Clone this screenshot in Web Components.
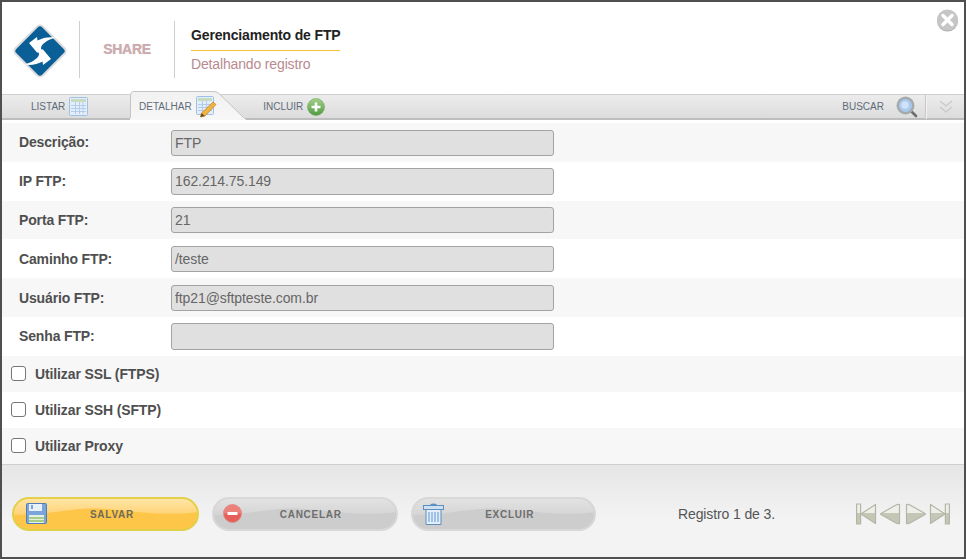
<!DOCTYPE html>
<html lang="pt-BR">
<head>
<meta charset="utf-8">
<title>Gerenciamento de FTP</title>
<style>
  html, body { margin: 0; padding: 0; background: #fff; }
  body { font-family: "Liberation Sans", Arial, sans-serif; }
</style>
</head>
<body>
<ftp-app>
  <ftp-header slot="header" title-text="Gerenciamento de FTP" subtitle="Detalhando registro"></ftp-header>
  <ftp-tabs slot="tabs"></ftp-tabs>

  <ftp-field label="Descrição:" value="FTP"></ftp-field>
  <ftp-field label="IP FTP:" value="162.214.75.149"></ftp-field>
  <ftp-field label="Porta FTP:" value="21"></ftp-field>
  <ftp-field label="Caminho FTP:" value="/teste"></ftp-field>
  <ftp-field label="Usuário FTP:" value="ftp21@sftpteste.com.br"></ftp-field>
  <ftp-field label="Senha FTP:" value=""></ftp-field>
  <ftp-check>Utilizar SSL (FTPS)</ftp-check>
  <ftp-check>Utilizar SSH (SFTP)</ftp-check>
  <ftp-check>Utilizar Proxy</ftp-check>

  <ftp-footer slot="footer">
    <ftp-button kind="save" primary>SALVAR</ftp-button>
    <ftp-button kind="cancel">CANCELAR</ftp-button>
    <ftp-button kind="delete">EXCLUIR</ftp-button>
    <ftp-pager text="Registro 1 de 3."></ftp-pager>
  </ftp-footer>
</ftp-app>

<script>
class FtpApp extends HTMLElement {
  connectedCallback() {
    this.attachShadow({ mode: "open" });
    this.shadowRoot.innerHTML = `
      <style>
        :host {
          display: flex;
          flex-direction: column;
          box-sizing: border-box;
          width: 966px;
          height: 559px;
          border: 2px solid #4f4f4f;
          background: #fff;
          overflow: hidden;
        }
        main {
          display: flex;
          flex-direction: column;
          padding-top: 3px;
        }
        /* header and tabs count as children too, so the first row is child 3 */
        ::slotted(ftp-field:nth-child(even)),
        ::slotted(ftp-check:nth-child(even)) { background: #fff; }
      </style>
      <slot name="header"></slot>
      <slot name="tabs"></slot>
      <main><slot></slot></main>
      <slot name="footer"></slot>
    `;
  }
}

class FtpHeader extends HTMLElement {
  connectedCallback() {
    this.attachShadow({ mode: "open" });
    this.shadowRoot.innerHTML = `
      <style>
        :host {
          display: flex;
          align-items: flex-start;
          position: relative;
          height: 92px;
          background: #fff;
          flex: none;
        }
        .logo { width: 56px; height: 56px; margin: 21px 0 0 10px; flex: none; }
        .sep { width: 1px; height: 57px; margin-top: 19px; background: #cfcfcf; flex: none; }
        .sep.a { margin-left: 11px; }
        .share {
          width: 94px;
          margin-top: 39px;
          text-align: center;
          font-size: 14px;
          font-weight: bold;
          letter-spacing: -0.3px;
          color: #cbabae;
          text-shadow: 0 0 1px #d8c0c2;
        }
        .titles { margin: 25px 0 0 16px; }
        .title {
          font-size: 14px;
          font-weight: bold;
          letter-spacing: -0.15px;
          color: #222;
          line-height: 17px;
          padding-bottom: 6px;
          border-bottom: 1px solid #f5c33b;
        }
        .sub {
          font-size: 14px;
          letter-spacing: -0.15px;
          color: #b98a90;
          line-height: 17px;
          margin-top: 5px;
        }
        .close { position: absolute; right: 5px; top: 7px; width: 23px; height: 23px; }
      </style>
      <svg class="logo" viewBox="0 0 56 56">
        <rect x="8.750" y="8.750" width="38.500" height="38.500" rx="4" transform="rotate(45 28 28)" fill="#0b5f97" stroke="#dcdcdc" stroke-width="2"/>
        <path d="M17 20 L25 14 L25.500 17.500 C31 14.500 37 13.500 43.500 14.500 C38 16 32 19 29.500 23 C28.500 25.500 29 28 31 30 L25 29.500 Z" fill="#fff"/>
        <path d="M39 36 L31 42 L30.500 38.500 C25 41.500 19 42.500 12.500 41.500 C18 40 24 37 26.500 33 C27.500 30.500 27 28 25 26 L31 26.500 Z" fill="#fff"/>
      </svg>
      <div class="sep a"></div>
      <div class="share">SHARE</div>
      <div class="sep"></div>
      <div class="titles">
        <div class="title">${this.getAttribute("title-text")}</div>
        <div class="sub">${this.getAttribute("subtitle")}</div>
      </div>
      <svg class="close" viewBox="0 0 23 23">
        <circle cx="11.500" cy="12" r="10.500" fill="#b0b0b0"/>
        <circle cx="11.500" cy="11" r="10.500" fill="#c6c6c6"/>
        <path d="M7 6.500l9 9M16 6.500l-9 9" stroke="#fff" stroke-width="3.400" stroke-linecap="round"/>
      </svg>
    `;
  }
}

const tableIcon = `
  <svg width="19" height="19" viewBox="0 0 19 19">
    <rect x=".5" y=".5" width="18" height="18" rx="1" fill="#e4eefa" stroke="#9fc0e4"/>
    <rect x="2" y="2" width="15" height="3" fill="#c5dcc0"/>
    <path d="M2 8.500h15M2 11.500h15M2 14.500h15M6.500 5v12M10.500 5v12M14 5v12" stroke="#b2cdea" fill="none"/>
  </svg>`;

class FtpTabs extends HTMLElement {
  connectedCallback() {
    this.attachShadow({ mode: "open" });
    this.shadowRoot.innerHTML = `
      <style>
        :host {
          display: flex;
          align-items: center;
          position: relative;
          box-sizing: border-box;
          height: 26px;
          flex: none;
          font-size: 10px;
          color: #5f6b78;
          background: linear-gradient(#ececec, #dcdcdc);
          border-top: 1px solid #cfcfcf;
          border-bottom: 2px solid #bdbdbd;
        }
        .tab { display: flex; align-items: center; gap: 4px; }
        .list { margin-left: 29px; }
        .active {
          position: absolute;
          left: 128px;
          top: -4px;
          width: 116px;
          height: 29px;
        }
        .active svg.bg { position: absolute; left: 0; top: 0; }
        .active .inner { position: absolute; left: 9px; top: 6px; display: flex; align-items: center; gap: 4px; height: 19px; }
        .add { margin-left: 175px; }
        .spacer { flex: 1; }
        .search { margin-right: 7px; }
        .lens { margin-left: 8px; }
        .div { width: 1px; height: 24px; background: #c8c8c8; border-right: 1px solid #f2f2f2; }
        .more { width: 37px; display: flex; justify-content: center; }
      </style>
      <div class="tab list"><span>LISTAR</span>${tableIcon}</div>
      <div class="active">
        <svg class="bg" width="116" height="29" viewBox="0 0 116 29">
          <defs><linearGradient id="t" x1="0" y1="0" x2="0" y2="1"><stop offset="0" stop-color="#f1f1f1"/><stop offset="1" stop-color="#f7f7f7"/></linearGradient></defs>
          <path d="M0 29 V5 Q0 .5 4 .5 H84 Q87 .5 89 2.500 L114 27 L116 29 Z" fill="url(#t)"/>
          <path d="M.5 27 V5 Q.5 .5 4 .5 H84 Q87 .5 89 2.500 L114 27" fill="none" stroke="#c4c4c4"/>
        </svg>
        <div class="inner">
          <span>DETALHAR</span>
          <svg width="21" height="21" viewBox="0 0 21 21" style="overflow:visible">
            <rect x=".5" y=".5" width="17" height="18" rx="1" fill="#e4eefa" stroke="#9fc0e4"/>
            <rect x="2" y="2" width="14" height="3" fill="#c5dcc0"/>
            <path d="M2 8.500h14M2 11.500h14M2 14.500h14M6.500 5v12M10.500 5v12" stroke="#b2cdea" fill="none"/>
            <path d="M17 6l3 2.500L9 20l-4.500 1 1-4Z" fill="#f2b441" stroke="#b9802a" stroke-width=".7"/>
            <path d="M4.500 21l1-4 3.400 3Z" fill="#6b4a22"/>
          </svg>
        </div>
      </div>
      <div class="tab add">
        <span>INCLUIR</span>
        <svg width="18" height="18" viewBox="0 0 18 18">
          <defs><linearGradient id="g" x1="0" y1="0" x2="0" y2="1"><stop offset="0" stop-color="#a7d08c"/><stop offset="1" stop-color="#4d9a3e"/></linearGradient></defs>
          <circle cx="9" cy="9" r="8.500" fill="url(#g)" stroke="#6fa95c" stroke-width=".6"/>
          <path d="M9 4.500v9M4.500 9h9" stroke="#fff" stroke-width="2.600"/>
        </svg>
      </div>
      <div class="spacer"></div>
      <div class="tab search">
        <span>BUSCAR</span>
        <svg class="lens" width="22" height="22" viewBox="0 0 22 22">
          <path d="M15 15l5 5" stroke="#6d6d6d" stroke-width="2.600" stroke-linecap="round"/>
          <circle cx="9.500" cy="9.500" r="9" fill="#a5abad"/>
          <circle cx="9.500" cy="9.500" r="6.500" fill="#a9c9ef"/>
          <circle cx="9" cy="9" r="3.800" fill="#cfe2f7"/>
        </svg>
      </div>
      <div class="div"></div>
      <div class="more">
        <svg width="16" height="16" viewBox="0 0 16 16" fill="none" stroke="#c8c8c8" stroke-width="1.200">
          <path d="M2 2l6 5 6-5M2 8l6 5 6-5"/>
        </svg>
      </div>
    `;
  }
}

class FtpField extends HTMLElement {
  connectedCallback() {
    this.attachShadow({ mode: "open" });
    this.shadowRoot.innerHTML = `
      <style>
        :host {
          display: flex;
          align-items: center;
          box-sizing: border-box;
          height: 38.8px;
          padding-left: 17px;
          background: #f7f7f7;
          flex: none;
        }
        label {
          width: 152px;
          flex: none;
          font-size: 14px;
          font-weight: bold;
          letter-spacing: -0.15px;
          color: #4f4f4f;
        }
        input {
          box-sizing: border-box;
          width: 383px;
          height: 26.4px;
          margin: 0.6px 0 0;
          padding: 0 3px;
          font: 14px "Liberation Sans", Arial, sans-serif;
          letter-spacing: -0.09px;
          color: #666;
          background: #e0e0e0;
          border: 1px solid #a3a3a3;
          border-radius: 3px;
          outline: none;
        }
      </style>
      <label>${this.getAttribute("label")}</label>
      <input type="text" disabled value="${this.getAttribute("value")}">
    `;
  }
}

class FtpCheck extends HTMLElement {
  connectedCallback() {
    this.attachShadow({ mode: "open" });
    this.shadowRoot.innerHTML = `
      <style>
        :host {
          display: flex;
          align-items: center;
          gap: 9px;
          height: 36px;
          padding-left: 9px;
          background: #f7f7f7;
          flex: none;
          font-size: 14px;
          font-weight: bold;
          letter-spacing: -0.12px;
          color: #4f4f4f;
        }
        i {
          box-sizing: border-box;
          width: 15px;
          height: 15px;
          background: #fff;
          border: 1.5px solid #767676;
          border-radius: 3px;
        }
      </style>
      <i></i><span><slot></slot></span>
    `;
  }
}

class FtpFooter extends HTMLElement {
  connectedCallback() {
    this.attachShadow({ mode: "open" });
    this.shadowRoot.innerHTML = `
      <style>
        :host {
          flex: 1;
          display: flex;
          align-items: flex-start;
          gap: 13px;
          box-sizing: border-box;
          padding: 32px 0 0 10px;
          border-top: 1px solid #cfcfcf;
          background: linear-gradient(#e6e6e6, #f3f3f3 60%);
        }
      </style>
      <slot></slot>
    `;
  }
}

const buttonIcons = {
  save: `<svg width="21" height="21" viewBox="0 0 21 21">
      <rect x=".5" y=".5" width="20" height="20" rx="1" fill="#7aa5dc" stroke="#4f7fb8"/>
      <rect x="3" y="1" width="13" height="7" fill="#e8f0fa"/>
      <rect x="5" y="2" width="2" height="4" fill="#7aa5dc"/>
      <rect x="3" y="12" width="15" height="8" fill="#e7efe0"/>
      <path d="M3 15h15M3 18h15" stroke="#a5cf88" stroke-width="2"/>
    </svg>`,
  cancel: `<svg width="19" height="19" viewBox="0 0 19 19">
      <circle cx="9.500" cy="9.500" r="9" fill="#e5605a" stroke="#d88a85" stroke-width=".8"/>
      <path d="M0.500 9.500a9 9 0 0 1 18 0z" fill="#f08f88" opacity=".7"/>
      <rect x="4.500" y="8" width="10" height="3" rx=".5" fill="#fff"/>
    </svg>`,
  delete: `<svg width="21" height="22" viewBox="0 0 21 22">
      <path d="M7 2.500Q7 .5 10.500 .5T14 2.500Z" fill="#5f8fbf"/>
      <rect x=".5" y="2.500" width="20" height="4" fill="#cfe0f2" stroke="#5f8fbf"/>
      <path d="M3 6.500h15v15H3Z" fill="#e3eefa" stroke="#5f8fbf"/>
      <path d="M6 9v10M9 9v10M12 9v10M15 9v10" stroke="#8db6e0" stroke-width="1.600"/>
    </svg>`
};

class FtpButton extends HTMLElement {
  connectedCallback() {
    const kind = this.getAttribute("kind");
    const primary = this.hasAttribute("primary");
    const marginLeft = { save: 12, cancel: 9, delete: 10 }[kind];
    this.attachShadow({ mode: "open" });
    this.shadowRoot.innerHTML = `
      <style>
        :host {
          display: flex;
          align-items: center;
          position: relative;
          box-sizing: border-box;
          width: ${primary ? 187 : 185.5}px;
          height: 34px;
          flex: none;
          border-radius: 17px;
          overflow: hidden;
          border: 2px solid ${primary ? "#e2d04a" : "#d8d8d8"};
          background: ${primary ? "#fdc648" : "#cdcdcd"};
          font-size: 10px;
          font-weight: bold;
          letter-spacing: 0.75px;
          color: ${primary ? "#6f6a5c" : "#6e6e6e"};
        }
        .shine { position: absolute; left: 0; top: 0; width: 100%; height: 100%; }
        .icon { position: relative; width: 32px; margin-left: ${marginLeft}px; display: flex; flex: none; }
        span { position: relative; flex: 1; text-align: center; padding: 2px ${kind == "save" ? 31 : 29}px 0 0; }
      </style>
      <svg class="shine" viewBox="0 0 187 34" preserveAspectRatio="none">
        <defs>
          <linearGradient id="s" x1="0" y1="0" x2="0" y2="1">
            <stop offset="0" stop-color="${primary ? "#ffe5a6" : "#e2e2e2"}"/>
            <stop offset="1" stop-color="${primary ? "#fed274" : "#d5d5d5"}"/>
          </linearGradient>
        </defs>
        <path d="M0 0H187V15C150 20 120 13 90 11 60 9 40 18 0 18Z" fill="url(#s)"/>
      </svg>
      <div class="icon">${buttonIcons[kind]}</div>
      <span><slot></slot></span>
    `;
  }
}

class FtpPager extends HTMLElement {
  connectedCallback() {
    this.attachShadow({ mode: "open" });
    this.shadowRoot.innerHTML = `
      <style>
        :host {
          display: flex;
          align-items: center;
          flex: 1;
          height: 34px;
          font-size: 14px;
          letter-spacing: -0.12px;
          color: #555;
        }
        .text { margin-left: 69px; width: 178px; white-space: nowrap; }
        .nav { display: flex; gap: 3px; }
      </style>
      <div class="text">${this.getAttribute("text")}</div>
      <div class="nav">
        <svg width="94" height="22" viewBox="0 0 94 22" stroke="#b3b5a6" stroke-width="1.200" stroke-linejoin="round">
          <defs>
            <linearGradient id="n" x1="0" y1="0" x2="0" y2="1">
              <stop offset=".45" stop-color="#efefe9"/><stop offset=".45" stop-color="#c4c6b6"/>
            </linearGradient>
          </defs>
          <rect x=".6" y="1" width="4" height="20" fill="url(#n)"/>
          <path d="M19.500 1.500V20.500L5 11Z" fill="url(#n)"/>
          <path d="M43.500 1.500V20.500Q42 21 40 20L25 11.500Q24 11 25 10.500L40 2Q42 1 43.500 1.500Z" fill="url(#n)"/>
          <path d="M50.500 1.500V20.500Q52 21 54 20L69 11.500Q70 11 69 10.500L54 2Q52 1 50.500 1.500Z" fill="url(#n)"/>
          <path d="M74.500 1.500V20.500L89 11Z" fill="url(#n)"/>
          <rect x="89.400" y="1" width="4" height="20" fill="url(#n)"/>
        </svg>
      </div>
    `;
  }
}

customElements.define("ftp-app", FtpApp);
customElements.define("ftp-header", FtpHeader);
customElements.define("ftp-tabs", FtpTabs);
customElements.define("ftp-field", FtpField);
customElements.define("ftp-check", FtpCheck);
customElements.define("ftp-footer", FtpFooter);
customElements.define("ftp-button", FtpButton);
customElements.define("ftp-pager", FtpPager);
</script>
</body>
</html>
